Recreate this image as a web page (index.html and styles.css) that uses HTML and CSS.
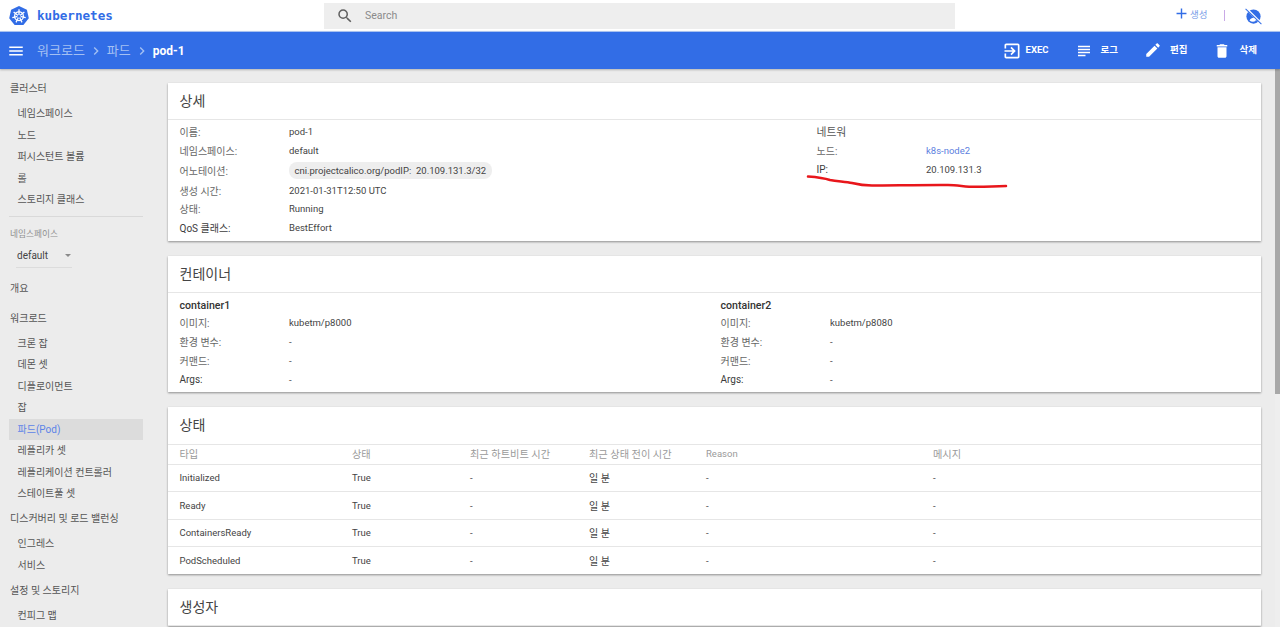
FILE: index.html
```html
<!DOCTYPE html>
<html lang="ko">
<head>
<meta charset="utf-8">
<title>kubernetes</title>
<link rel="stylesheet" href="styles.css">
</head>
<body>
<header class="topbar">
  <div class="brand">
    <svg class="logo" viewBox="0 0 24 24" width="22" height="22">
      <path class="logo-bg" d="M12 1 L20.600 5.100 L22.700 14.400 L16.800 21.900 L7.200 21.900 L1.300 14.400 L3.400 5.100 Z"/>
      <g class="logo-wheel">
        <circle cx="12" cy="12.200" r="4.800"/>
        <path d="M12 12.200L12 4.700M12 12.200L17.870 7.520M12 12.200L19.310 13.870M12 12.200L15.250 18.960M12 12.200L8.750 18.960M12 12.200L4.690 13.870M12 12.200L6.130 7.520"/>
      </g>
      <circle class="logo-hub" cx="12" cy="12.200" r="1.700"/>
    </svg>
    <span class="wordmark">kubernetes</span>
  </div>
  <div class="search">
    <svg class="search-icon" viewBox="0 0 24 24" width="18" height="18"><path d="M15.500 14h-.79l-.28-.27A6.470 6.470 0 0 0 16 9.500 6.500 6.500 0 1 0 9.500 16c1.610 0 3.090-.59 4.230-1.570l.27.28v.79l5 4.990L20.490 19l-4.990-5zm-6 0C7.010 14 5 11.990 5 9.500S7.010 5 9.500 5 14 7.010 14 9.500 11.990 14 9.500 14z"/></svg>
    <span class="search-text">Search</span>
  </div>
  <div class="top-actions">
    <svg class="plus" viewBox="0 0 24 24" width="17" height="17"><path d="M19 13h-6v6h-2v-6H5v-2h6V5h2v6h6v2z"/></svg>
    <span class="create">생성</span>
    <span class="sep"></span>
    <svg class="noacct" viewBox="0 0 24 24" width="19" height="19">
      <circle cx="12" cy="12" r="9"/>
      <path class="noacct-inner" d="M7 17c1-2.500 3-3.500 5-3.500s3 .5 4 1.500l-2 3c-2.500 1-5 .5-7-1z"/>
      <path class="noacct-gap" d="M3.500 2.500l18 18"/>
      <path class="noacct-slash" d="M2 2.500l20 19"/>
    </svg>
  </div>
</header>

<div class="toolbar">
  <div class="crumbs">
    <svg class="menu" viewBox="0 0 24 24" width="18" height="18"><path d="M3 18h18v-2H3v2zm0-5h18v-2H3v2zm0-7v2h18V6H3z"/></svg>
    <span class="crumb">워크로드</span>
    <svg class="chev" viewBox="0 0 24 24" width="16" height="16"><path d="M10 6L8.590 7.410 13.170 12l-4.580 4.590L10 18l6-6z"/></svg>
    <span class="crumb">파드</span>
    <svg class="chev" viewBox="0 0 24 24" width="16" height="16"><path d="M10 6L8.590 7.410 13.170 12l-4.580 4.590L10 18l6-6z"/></svg>
    <span class="crumb-current">pod-1</span>
  </div>
  <div class="tools">
    <div class="tool tool-exec">
      <svg viewBox="0 0 24 24" width="20" height="20"><path d="M10.090 15.590L11.500 17l5-5-5-5-1.410 1.410L12.670 11H3v2h9.670l-2.580 2.590zM19 3H5c-1.110 0-2 .9-2 2v4h2V5h14v14H5v-4H3v4c0 1.100.89 2 2 2h14c1.100 0 2-.9 2-2V5c0-1.100-.9-2-2-2z"/></svg>
      <span>EXEC</span>
    </div>
    <div class="tool tool-log">
      <svg viewBox="0 0 24 24" width="18" height="18"><path d="M14 17H4v2h10v-2zm6-8H4v2h16V9zM4 15h16v-2H4v2zM4 5v2h16V5H4z"/></svg>
      <span>로그</span>
    </div>
    <div class="tool tool-edit">
      <svg viewBox="0 0 24 24" width="18" height="18"><path d="M3 17.250V21h3.750L17.810 9.940l-3.750-3.750L3 17.250zM20.710 7.040c.39-.39.39-1.020 0-1.410l-2.340-2.340c-.39-.39-1.020-.39-1.410 0l-1.830 1.830 3.750 3.750 1.830-1.830z"/></svg>
      <span>편집</span>
    </div>
    <div class="tool tool-del">
      <svg viewBox="0 0 24 24" width="18" height="18"><path d="M6 19c0 1.100.9 2 2 2h8c1.100 0 2-.9 2-2V7H6v12zM19 4h-3.500l-1-1h-5l-1 1H5v2h14V4z"/></svg>
      <span>삭제</span>
    </div>
  </div>
</div>

<div class="layout">
  <nav class="sidebar">
    <div class="nav-head">클러스터</div>
    <div class="nav-item">네임스페이스</div>
    <div class="nav-item">노드</div>
    <div class="nav-item">퍼시스턴트 볼륨</div>
    <div class="nav-item">롤</div>
    <div class="nav-item">스토리지 클래스</div>
    <div class="nav-divider"></div>
    <div class="ns-label">네임스페이스</div>
    <div class="ns-select"><span>default</span><i class="caret"></i></div>
    <div class="nav-head nav-head-overview">개요</div>
    <div class="nav-head nav-head-work">워크로드</div>
    <div class="nav-item">크론 잡</div>
    <div class="nav-item">데몬 셋</div>
    <div class="nav-item">디플로이먼트</div>
    <div class="nav-item">잡</div>
    <div class="nav-item nav-active">파드(Pod)</div>
    <div class="nav-item">레플리카 셋</div>
    <div class="nav-item">레플리케이션 컨트롤러</div>
    <div class="nav-item">스테이트풀 셋</div>
    <div class="nav-head nav-head-sub">디스커버리 및 로드 밸런싱</div>
    <div class="nav-item">인그레스</div>
    <div class="nav-item">서비스</div>
    <div class="nav-head nav-head-sub">설정 및 스토리지</div>
    <div class="nav-item">컨피그 맵</div>
  </nav>

  <main class="main">
    <section class="card">
      <h2 class="card-title">상세</h2>
      <div class="detail-grid">
        <div class="kv-col">
          <div class="kv"><span class="k">이름:</span><span class="v">pod-1</span></div>
          <div class="kv"><span class="k">네임스페이스:</span><span class="v">default</span></div>
          <div class="kv kv-chip"><span class="k">어노테이션:</span><span class="v chip">cni.projectcalico.org/podIP:&nbsp; 20.109.131.3/32</span></div>
          <div class="kv"><span class="k">생성 시간:</span><span class="v">2021-01-31T12:50 UTC</span></div>
          <div class="kv"><span class="k">상태:</span><span class="v">Running</span></div>
          <div class="kv"><span class="k k-dark">QoS 클래스:</span><span class="v">BestEffort</span></div>
        </div>
        <div class="kv-col">
          <div class="kv net-head">네트워</div>
          <div class="kv"><span class="k">노드:</span><span class="v link">k8s-node2</span></div>
          <div class="kv"><span class="k k-dark">IP:</span><span class="v">20.109.131.3</span></div>
        </div>
      </div>
    </section>

    <section class="card">
      <h2 class="card-title">컨테이너</h2>
      <div class="container-grid">
        <div class="kv-col">
          <div class="c-name">container1</div>
          <div class="kv"><span class="k">이미지:</span><span class="v">kubetm/p8000</span></div>
          <div class="kv"><span class="k">환경 변수:</span><span class="v">-</span></div>
          <div class="kv"><span class="k">커맨드:</span><span class="v">-</span></div>
          <div class="kv"><span class="k k-dark">Args:</span><span class="v">-</span></div>
        </div>
        <div class="kv-col">
          <div class="c-name">container2</div>
          <div class="kv"><span class="k">이미지:</span><span class="v">kubetm/p8080</span></div>
          <div class="kv"><span class="k">환경 변수:</span><span class="v">-</span></div>
          <div class="kv"><span class="k">커맨드:</span><span class="v">-</span></div>
          <div class="kv"><span class="k k-dark">Args:</span><span class="v">-</span></div>
        </div>
      </div>
    </section>

    <section class="card">
      <h2 class="card-title card-title-status">상태</h2>
      <table class="table">
        <thead>
          <tr><th>타입</th><th>상태</th><th>최근 하트비트 시간</th><th>최근 상태 전이 시간</th><th class="th-latin">Reason</th><th>메시지</th></tr>
        </thead>
        <tbody>
          <tr><td>Initialized</td><td>True</td><td>-</td><td class="td-ko">일 분</td><td>-</td><td>-</td></tr>
          <tr><td>Ready</td><td>True</td><td>-</td><td class="td-ko">일 분</td><td>-</td><td>-</td></tr>
          <tr><td>ContainersReady</td><td>True</td><td>-</td><td class="td-ko">일 분</td><td>-</td><td>-</td></tr>
          <tr><td>PodScheduled</td><td>True</td><td>-</td><td class="td-ko">일 분</td><td>-</td><td>-</td></tr>
        </tbody>
      </table>
    </section>

    <section class="card">
      <h2 class="card-title">생성자</h2>
    </section>
  </main>

  <div class="scrollbar"><div class="scroll-thumb"></div></div>
</div>

<svg class="annotation" viewBox="0 0 1280 627" width="1280" height="627">
  <path d="M808 176.500C815 177 824 178 830 180C838 181.500 846 181.500 852 183C858 184.500 864 185.500 872 185.500C890 185.500 925 184.800 948 185C958 185 965 186.800 975 186.800C985 186.800 998 186.500 1006 186"/>
</svg>
</body>
</html>
```
FILE: styles.css
```css
* { box-sizing: border-box; }
html, body { margin: 0; height: 100%; overflow: hidden; }
body {
  font-family: Roboto, "Noto Sans CJK KR", sans-serif;
  font-size: 10px;
  color: #444;
  background: #ececec;
  display: flex;
  flex-direction: column;
  position: relative;
}

/* top bar */
.topbar { height: 31px; flex: none; background: #fff; display: flex; align-items: center; position: relative; }
.brand { display: flex; align-items: center; width: 324px; padding-left: 8px; }
.logo-bg { fill: #326de6; }
.logo-wheel { fill: none; stroke: #fff; stroke-width: 1.400; }
.logo-hub { fill: #326de6; }
.wordmark { margin-left: 7px; font-family: "DejaVu Sans Mono", monospace; font-weight: 700; font-size: 12.600px; color: #326de6; }
.search { width: 631px; height: 26px; background: #eeeeee; display: flex; align-items: center; padding-left: 12px; }
.search-icon { fill: #5f5f5f; }
.search-text { margin-left: 11px; font-size: 10.500px; color: #8a8a8a; }
.top-actions { flex: 1; display: flex; align-items: center; padding-left: 218px; }
.plus { fill: #326de6; margin-top: -5px; }
.create { margin-left: 0; font-size: 9.500px; color: #7b9ee8; margin-top: -3px; }
.sep { width: 1px; height: 11px; background: #c9a9e6; margin-left: 17px; margin-top: 0; }
.noacct { margin-left: 18.500px; margin-top: 1px; }
.noacct circle { fill: #326de6; }
.noacct-inner { fill: #fff; }
.noacct-gap { stroke: #fff; stroke-width: 3; fill: none; }
.noacct-slash { stroke: #326de6; stroke-width: 1.300; fill: none; }

/* toolbar */
.toolbar { height: 38px; flex: none; background: #326de6; border-top: 1px solid #a9c1ef; box-shadow: 0 1px 2px rgba(0,0,0,.25); display: flex; align-items: center; justify-content: space-between; color: #fff; position: relative; z-index: 2; }
.crumbs { display: flex; align-items: center; padding-left: 7px; }
.menu { fill: #fff; }
.crumb { font-size: 13px; color: #a4c0f3; margin-top: -2px; }
.crumbs .crumb:first-of-type { margin-left: 12px; }
.chev { fill: #a4c0f3; margin: 0 3px; }
.crumb-current { font-size: 12px; font-weight: 700; color: #fff; }
.tools { display: flex; align-items: center; padding-right: 23px; }
.tool { display: flex; align-items: center; font-size: 9.500px; font-weight: 700; }
.tool svg { fill: #fff; }
.tool span { margin-top: -3px; }
.tool-exec svg { margin-right: 3.500px; }
.tool-log svg { margin-right: 8px; }
.tool-edit svg { margin-right: 8px; margin-top: -1px; }
.tool-del svg { margin-right: 9px; }
.tool-log { margin-left: 26px; }
.tool-edit { margin-left: 26px; }
.tool-del { margin-left: 25px; }

/* layout */
.layout { flex: 1; min-height: 0; display: flex; overflow: hidden; }
.sidebar { width: 155px; flex: none; padding: 9px 0 0 9px; color: #555; overflow: hidden; }
.nav-head { height: 21px; line-height: 21px; padding-left: 1px; color: #555; }
.nav-item { height: 21.500px; line-height: 21.500px; width: 134px; padding-left: 8.500px; color: #555; }
.sidebar .nav-head + .nav-item { margin-top: 4px; }
.nav-divider { height: 1px; background: #d9d9d9; width: 134px; margin-top: 5.500px; }
.ns-label { font-size: 8.700px; color: #8f8f8f; padding-left: 1px; margin-top: 11px; line-height: 12px; }
.ns-select { width: 56px; margin: 4px 0 0 7px; height: 24px; border-bottom: 1px solid #dcdcdc; padding-left: 1px; display: flex; align-items: center; justify-content: space-between; color: #444; }
.caret { width: 0; height: 0; border: 3.500px solid transparent; border-top-color: #8a8a8a; border-bottom: 0; margin-right: 1px; }
.nav-head-overview { margin-top: 10px; }
.nav-head-work { margin-top: 8.500px; }
.nav-head-sub { margin-top: 3.500px; }
.nav-active { background: #dcdcdc; color: #5c84e8; }

.main { flex: 1; min-width: 0; padding: 14px 14px 0 13px; display: flex; flex-direction: column; gap: 15px; overflow: hidden; }
.card { flex: none; background: #fff; box-shadow: 0 1px 2px rgba(0,0,0,.4); }
.card-title { margin: 0; height: 37px; padding: 0 11.500px; line-height: 36px; font-size: 14px; font-weight: 400; color: #444; border-bottom: 1px solid #e6e6e6; }
.card-title-status { height: 38px; }

.detail-grid { display: grid; grid-template-columns: 637px 1fr; padding: 1.800px 11px 3.500px 11.500px; height: 121px; }
.container-grid { display: grid; grid-template-columns: 541px 1fr; padding: 4px 11px 0 11.500px; height: 99px; }
.kv-col { display: flex; flex-direction: column; }
.kv { display: flex; align-items: center; height: 18.900px; }
.kv-chip { height: 21px; }
.k { width: 109.500px; flex: none; color: #666; }
.k-dark { color: #3c3c3c; }
.v { font-size: 9.500px; }
.net-head { font-size: 10.800px; color: #555; }
.link { color: #5c7fe0; }
.chip { background: #eeeeee; border-radius: 8px; height: 17px; line-height: 17px; padding: 0 5.500px; }
.c-name { font-weight: 500; font-size: 10.600px; height: 16px; line-height: 17px; color: #333; }

.table { width: 100%; border-collapse: collapse; table-layout: fixed; }
.table th, .table td { padding: 0; text-align: left; font-weight: 400; }
.table th { color: #9a9a9a; height: 19px; font-size: 10.200px; padding-bottom: 1px; }
.table .th-latin { font-size: 9.500px; }
.table td { height: 27.500px; border-top: 1px solid #e6e6e6; font-size: 9.500px; }
.table .td-ko { font-size: 10px; }
.table th:nth-child(1), .table td:nth-child(1) { width: 184px; padding-left: 11.500px; }
.table th:nth-child(2) { width: 118px; }
.table th:nth-child(3) { width: 119px; }
.table th:nth-child(4) { width: 117px; }
.table th:nth-child(5) { width: 227px; }

.scrollbar { width: 5px; flex: none; background: #eeeeee; }
.scroll-thumb { height: 325px; background: #a8a8a8; }

.annotation { position: absolute; left: 0; top: 0; pointer-events: none; }
.annotation path { fill: none; stroke: #e8161b; stroke-width: 2.500; stroke-linecap: round; }
```
